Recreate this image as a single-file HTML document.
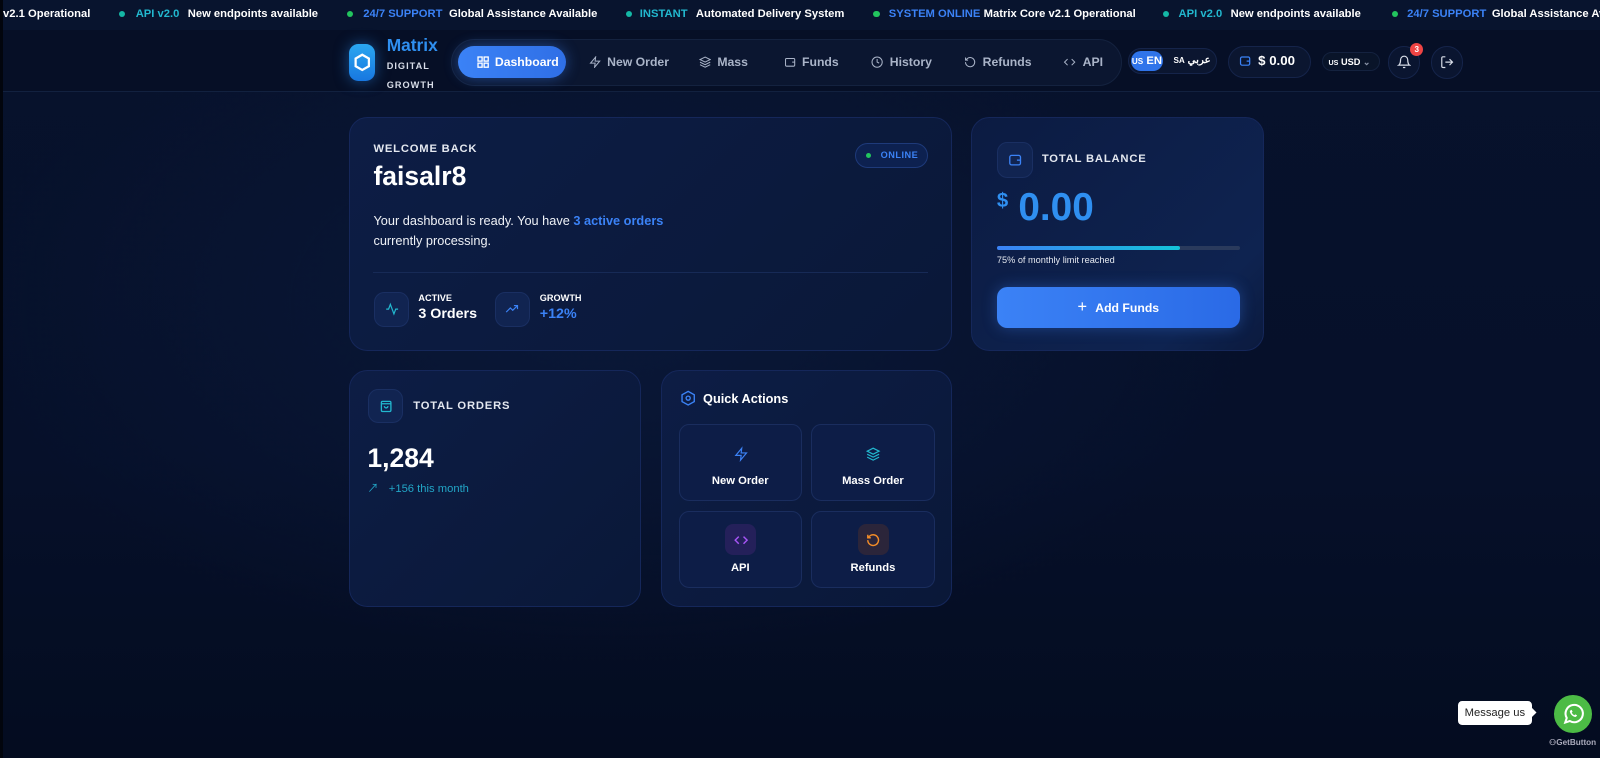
<!DOCTYPE html>
<html><head><meta charset="utf-8"><style>
*{box-sizing:border-box;margin:0;padding:0}
html,body{width:1600px;height:758px;overflow:hidden;background:#06102a}
body{font-family:"Liberation Sans","Noto Sans CJK SC",sans-serif;color:#fff}
#w{zoom:1.0204;width:1568px;height:743px;position:relative;overflow:hidden;
background:radial-gradient(ellipse 900px 500px at 600px 300px,#0a1838 0%,rgba(8,18,44,0) 70%),linear-gradient(180deg,#07122c 0%,#06102a 60%,#040c20 100%)}
.a{position:absolute}
.tick{left:0;top:0;width:1568px;height:29px;background:#08142e;font-size:11px;font-weight:700;white-space:nowrap}
.tick span{position:absolute;top:8px}
.dot{width:6px;height:6px;border-radius:50%;top:11px!important}
.hdr{left:0;top:29px;width:1568px;height:61px;border-bottom:1px solid #12213f;background:#060f26}
.nav{left:442px;top:38px;width:658px;height:46px;border-radius:23px;background:#0b1630;border:1px solid #14223f}
.ni{position:absolute;top:54px;font-size:12px;font-weight:700;color:#aab4c8;display:flex;align-items:center;gap:6px}
.card{position:absolute;border-radius:18px;background:linear-gradient(135deg,#0d1d45,#0a1838);border:1px solid #15275a}
.ib{position:absolute;border-radius:10px;background:#112451;border:1px solid #1a2f62;display:flex;align-items:center;justify-content:center}
.lbl{position:absolute;font-size:11px;font-weight:700;letter-spacing:.8px;color:#e4e8f0}
.tile{position:absolute;width:121px;height:75px;border-radius:10px;background:#0d1d47;border:1px solid #1a2d5e}
.tile .t{position:absolute;left:0;right:0;text-align:center;top:49px;font-size:11px;font-weight:700}
.tile svg{position:absolute;left:53px;top:20px}
</style></head><body><div id="w">
<div class="a" style="left:0;top:0;width:3px;height:743px;background:#02050d;z-index:5"></div>
<div class="a tick">
<span style="left:3px">v2.1 Operational</span>
<span class="dot" style="left:117px;background:#14b8a6"></span><span style="left:133px;color:#22b8cf">API v2.0</span><span style="left:184px">New endpoints available</span>
<span class="dot" style="left:340px;background:#22c55e"></span><span style="left:356px;color:#3b82f6">24/7 SUPPORT</span><span style="left:440px">Global Assistance Available</span>
<span class="dot" style="left:613px;background:#14b8a6"></span><span style="left:627px;color:#22b8cf">INSTANT</span><span style="left:682px">Automated Delivery System</span>
<span class="dot" style="left:856px;background:#22c55e"></span><span style="left:871px;color:#3b82f6">SYSTEM ONLINE</span><span style="left:964px">Matrix Core v2.1 Operational</span>
<span class="dot" style="left:1140px;background:#14b8a6"></span><span style="left:1155px;color:#22b8cf">API v2.0</span><span style="left:1206px">New endpoints available</span>
<span class="dot" style="left:1364px;background:#22c55e"></span><span style="left:1379px;color:#3b82f6">24/7 SUPPORT</span><span style="left:1462px">Global Assistance Available</span>
</div>
<div class="a hdr"></div>
<div class="a" style="left:342px;top:43px;width:26px;height:36px;border-radius:9px;background:linear-gradient(180deg,#2aa7f0,#1877e0);box-shadow:0 0 14px rgba(40,140,240,.5)"><svg width="26" height="36" viewBox="0 0 26 36"><path d="M13 10.5l6.5 3.75v7.5L13 25.5l-6.5-3.75v-7.5z" fill="none" stroke="#fff" stroke-width="2.2"/></svg></div>
<div class="a" style="left:379px;top:34px;font-size:17px;font-weight:700;color:#2f8ff0">Matrix</div>
<div class="a" style="left:379px;top:56px;font-size:9px;font-weight:700;letter-spacing:1px;color:#d8dde8;line-height:18px">DIGITAL<br>GROWTH</div>
<div class="a nav"></div>
<div class="a" style="left:449px;top:45px;width:106px;height:31px;border-radius:16px;background:linear-gradient(90deg,#3b82f6,#2f6fe6);box-shadow:0 0 14px rgba(59,130,246,.45)"></div>
<div class="ni" style="left:467px;color:#fff"><svg width="12" height="12" viewBox="0 0 12 12" fill="none" stroke="#fff" stroke-width="1.3"><rect x="1" y="1" width="4" height="4"/><rect x="7" y="1" width="4" height="4"/><rect x="1" y="7" width="4" height="4"/><rect x="7" y="7" width="4" height="4"/></svg>Dashboard</div>
<div class="ni" style="left:577px"><svg width="12" height="12" viewBox="0 0 24 24" fill="none" stroke="#aab4c8" stroke-width="2"><path d="M13 2L3 14h9l-1 8 10-12h-9z"/></svg>New Order</div>
<div class="ni" style="left:685px"><svg width="12" height="12" viewBox="0 0 24 24" fill="none" stroke="#aab4c8" stroke-width="2"><path d="M12 2L2 7l10 5 10-5zM2 12l10 5 10-5M2 17l10 5 10-5"/></svg>Mass</div>
<div class="ni" style="left:768px"><svg width="12" height="12" viewBox="0 0 24 24" fill="none" stroke="#aab4c8" stroke-width="2"><rect x="3" y="5" width="18" height="15" rx="2"/><path d="M16 12h5"/></svg>Funds</div>
<div class="ni" style="left:854px"><svg width="12" height="12" viewBox="0 0 24 24" fill="none" stroke="#aab4c8" stroke-width="2"><circle cx="12" cy="12" r="10"/><path d="M12 6v6l4 2"/></svg>History</div>
<div class="ni" style="left:945px"><svg width="12" height="12" viewBox="0 0 24 24" fill="none" stroke="#aab4c8" stroke-width="2"><path d="M3 12a9 9 0 1 0 3-6.7L3 8M3 3v5h5"/></svg>Refunds</div>
<div class="ni" style="left:1042px"><svg width="13" height="12" viewBox="0 0 24 24" fill="none" stroke="#aab4c8" stroke-width="2"><path d="M8 6l-6 6 6 6M16 6l6 6-6 6"/></svg>API</div>
<div class="a" style="left:1105px;top:47px;width:88px;height:26px;border-radius:13px;background:#0b1630;border:1px solid #15244a"></div>
<div class="a" style="left:1108px;top:50px;width:32px;height:20px;border-radius:10px;background:#2f74ea;font-size:11px;font-weight:700;text-align:center;line-height:20px"><span style="font-size:8px">US</span> EN</div>
<div class="a" style="left:1150px;top:54px;font-size:10px;font-weight:700"><span style="font-size:8px">SA</span> عربي</div>
<div class="a" style="left:1203px;top:45px;width:82px;height:31px;border-radius:16px;background:#0b1630;border:1px solid #15244a"></div>
<svg class="a" style="left:1214px;top:54px" width="12" height="12" viewBox="0 0 24 24" fill="none" stroke="#3b82f6" stroke-width="2.4"><rect x="3" y="4" width="18" height="16" rx="3"/><path d="M15 12h6"/></svg>
<div class="a" style="left:1233px;top:52px;font-size:13px;font-weight:700">$ 0.00</div>
<div class="a" style="left:1296px;top:51px;width:56px;height:19px;border-radius:10px;background:#091429;border:1px solid #14223f;font-size:9px;font-weight:700;line-height:18px;padding-left:5px"><span style="font-size:7px">US</span> USD <span style="color:#8a94a8">⌄</span></div>
<div class="a" style="left:1360px;top:45px;width:32px;height:32px;border-radius:50%;background:#0a1530;border:1px solid #15244a"></div>
<svg class="a" style="left:1369px;top:54px" width="14" height="14" viewBox="0 0 24 24" fill="none" stroke="#d8dde8" stroke-width="2"><path d="M6 8a6 6 0 0 1 12 0c0 7 3 9 3 9H3s3-2 3-9M10 21h4"/></svg>
<div class="a" style="left:1382px;top:42px;width:13px;height:13px;border-radius:50%;background:#ef4444;font-size:8px;font-weight:700;text-align:center;line-height:13px">3</div>
<div class="a" style="left:1402px;top:45px;width:32px;height:32px;border-radius:50%;background:#0a1530;border:1px solid #15244a"></div>
<svg class="a" style="left:1411px;top:54px" width="14" height="14" viewBox="0 0 24 24" fill="none" stroke="#d8dde8" stroke-width="2"><path d="M9 21H5a2 2 0 0 1-2-2V5a2 2 0 0 1 2-2h4M16 17l5-5-5-5M21 12H9"/></svg>

<!-- welcome -->
<div class="card" style="left:342px;top:115px;width:591px;height:229px"></div>
<div class="lbl" style="left:366px;top:140px">WELCOME BACK</div>
<div class="a" style="left:366px;top:158px;font-size:26px;font-weight:700">faisalr8</div>
<div class="a" style="left:838px;top:140px;width:71px;height:25px;border-radius:13px;background:#0d2150;border:1px solid #1e3a7a;font-size:9px;font-weight:700;color:#3b82f6;letter-spacing:.5px;line-height:23px;padding-left:24px">ONLINE</div>
<div class="a" style="left:849px;top:150px;width:5px;height:5px;border-radius:50%;background:#22c55e"></div>
<div class="a" style="left:366px;top:207px;font-size:12.5px;line-height:19px;color:#eef1f6">Your dashboard is ready. You have <span style="color:#3b82f6;font-weight:700">3 active orders</span><br>currently processing.</div>
<div class="a" style="left:366px;top:267px;width:543px;height:1px;background:#172a56"></div>
<div class="ib" style="left:367px;top:286px;width:34px;height:34px"><svg width="14" height="14" viewBox="0 0 24 24" fill="none" stroke="#22b8cf" stroke-width="2"><path d="M2 12h4l3-8 6 16 3-8h4"/></svg></div>
<div class="a" style="left:410px;top:287px;font-size:9px;font-weight:700">ACTIVE</div>
<div class="a" style="left:410px;top:300px;font-size:14px;font-weight:700">3 Orders</div>
<div class="ib" style="left:485px;top:286px;width:34px;height:34px"><svg width="14" height="14" viewBox="0 0 24 24" fill="none" stroke="#3b82f6" stroke-width="2"><path d="M2 17l7-7 4 4 8-8M15 6h6v6"/></svg></div>
<div class="a" style="left:529px;top:287px;font-size:9px;font-weight:700">GROWTH</div>
<div class="a" style="left:529px;top:300px;font-size:14px;font-weight:700;color:#3b82f6">+12%</div>

<!-- balance -->
<div class="card" style="left:952px;top:115px;width:287px;height:229px;background:linear-gradient(135deg,#0c1b42,#0e2350 80%,#0b1a3e)"></div>
<div class="ib" style="left:977px;top:139px;width:35px;height:35px"><svg width="14" height="14" viewBox="0 0 24 24" fill="none" stroke="#3b82f6" stroke-width="2.2"><rect x="3" y="4" width="18" height="16" rx="3"/><path d="M15 12h6"/></svg></div>
<div class="lbl" style="left:1021px;top:150px">TOTAL BALANCE</div>
<div class="a" style="left:977px;top:186px;font-size:20px;font-weight:700;color:#2f8ff0">$</div>
<div class="a" style="left:998px;top:182px;font-size:38px;font-weight:700;color:#2f8ff0">0.00</div>
<div class="a" style="left:977px;top:241px;width:238px;height:4px;border-radius:2px;background:#2a3a5c"></div>
<div class="a" style="left:977px;top:241px;width:179px;height:4px;border-radius:2px;background:linear-gradient(90deg,#3b82f6,#14c3d8)"></div>
<div class="a" style="left:977px;top:250px;font-size:9px;color:#e4e8f0">75% of monthly limit reached</div>
<div class="a" style="left:977px;top:281px;width:238px;height:40px;border-radius:10px;background:linear-gradient(90deg,#3b82f6,#2a6ae6);box-shadow:0 0 14px rgba(59,130,246,.35);font-size:12px;font-weight:700;text-align:center;line-height:40px"><span style="font-size:16px;font-weight:400;margin-right:8px">+</span>Add Funds</div>

<!-- total orders -->
<div class="card" style="left:342px;top:363px;width:286px;height:232px"></div>
<div class="ib" style="left:361px;top:381px;width:34px;height:34px"><svg width="14" height="14" viewBox="0 0 24 24" fill="none" stroke="#22b8cf" stroke-width="2.2"><rect x="4" y="4" width="16" height="17" rx="2"/><path d="M4 8h16M9 12a3 3 0 0 0 6 0"/></svg></div>
<div class="lbl" style="left:405px;top:392px">TOTAL ORDERS</div>
<div class="a" style="left:360px;top:434px;font-size:26px;font-weight:700">1,284</div>
<div class="a" style="left:360px;top:470px;font-size:11px;color:#22a6c7"><span style="margin-right:10px">↗</span>+156 this month</div>

<!-- quick actions -->
<div class="card" style="left:648px;top:363px;width:285px;height:232px"></div>
<svg class="a" style="left:666px;top:382px" width="16" height="16" viewBox="0 0 24 24" fill="none" stroke="#3b82f6" stroke-width="2"><path d="M12 2l9 5v10l-9 5-9-5V7z"/><circle cx="12" cy="12" r="3"/></svg>
<div class="a" style="left:689px;top:383px;font-size:12.5px;font-weight:700">Quick Actions</div>
<div class="tile" style="left:665px;top:416px"><svg width="14" height="16" viewBox="0 0 24 24" fill="none" stroke="#3b82f6" stroke-width="2"><path d="M13 2L3 14h9l-1 8 10-12h-9z"/></svg><div class="t">New Order</div></div>
<div class="tile" style="left:795px;top:416px"><svg width="14" height="16" viewBox="0 0 24 24" fill="none" stroke="#22b8cf" stroke-width="2"><path d="M12 2L2 7l10 5 10-5zM2 12l10 5 10-5M2 17l10 5 10-5"/></svg><div class="t">Mass Order</div></div>
<div class="tile" style="left:665px;top:501px"><div class="a" style="left:45px;top:12px;width:30px;height:30px;border-radius:8px;background:#24205a"></div><svg width="14" height="14" viewBox="0 0 24 24" fill="none" stroke="#a855f7" stroke-width="2.4" style="top:20px"><path d="M8 6l-6 6 6 6M16 6l6 6-6 6"/></svg><div class="t" style="top:49px">API</div></div>
<div class="tile" style="left:795px;top:501px"><div class="a" style="left:45px;top:12px;width:30px;height:30px;border-radius:8px;background:#2b253a"></div><svg width="14" height="14" viewBox="0 0 24 24" fill="none" stroke="#f28c28" stroke-width="2.4" style="top:20px"><path d="M3 12a9 9 0 1 0 3-6.7L3 8M3 3v5h5"/></svg><div class="t" style="top:49px">Refunds</div></div>

<!-- whatsapp -->
<div class="a" style="left:1429px;top:687px;width:72px;height:24px;border-radius:4px;background:#fff;color:#222;font-size:11px;text-align:center;line-height:24px">Message us</div>
<div class="a" style="left:1497px;top:695px;width:7px;height:7px;background:#fff;transform:rotate(45deg)"></div>
<div class="a" style="left:1523px;top:681px;width:37px;height:37px;border-radius:50%;background:#4cbb45"><svg width="37" height="37" viewBox="0 0 37 37" fill="none" stroke="#fff" stroke-width="2"><path d="M11 27l1.5-4.5A8.5 8.5 0 1 1 15.5 25.5z"/><path d="M15.5 15.5c0 3 3 6 6 6l1.2-1.5-1.8-1-1 .8c-1-.5-2-1.5-2.5-2.5l.8-1-1-1.8z" fill="#fff" stroke="none"/></svg></div>
<div class="a" style="left:1518px;top:722px;font-size:8px;font-weight:700;color:#aab">⚇GetButton</div>
</div></body></html>
